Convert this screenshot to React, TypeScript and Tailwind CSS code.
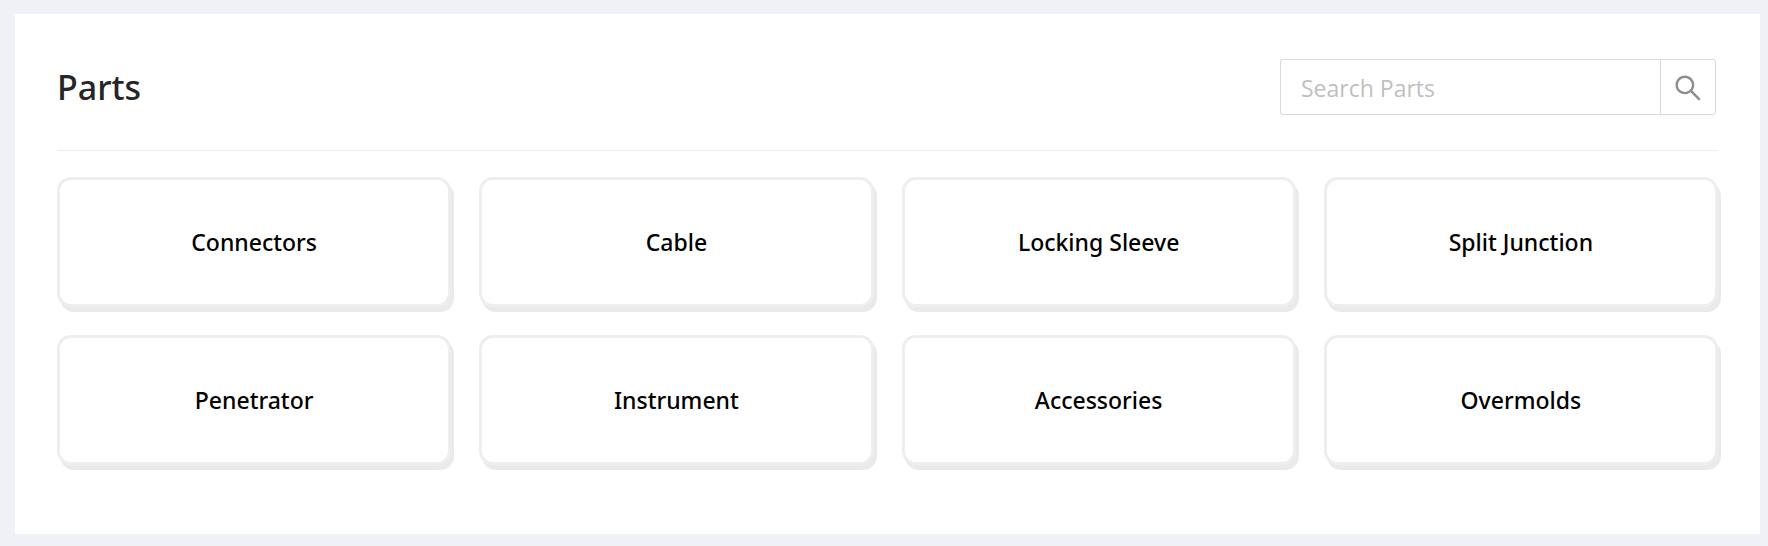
import { AiOutlineSearch } from "react-icons/ai";

const categories = [
  "Connectors",
  "Cable",
  "Locking Sleeve",
  "Split Junction",
  "Penetrator",
  "Instrument",
  "Accessories",
  "Overmolds",
];

function SearchBox() {
  return (
    <form
      role="search"
      className="flex h-14 w-full max-w-[436px]"
      onSubmit={(event) => event.preventDefault()}
    >
      <input
        type="text"
        aria-label="Search Parts"
        placeholder="Search Parts"
        className="min-w-0 flex-1 rounded-l-[3px] border border-r-0 border-[#d9d9d9] bg-white px-5 pt-0.5 font-['Open_Sans','Noto_Sans',sans-serif] text-[23px] text-black/85 outline-none placeholder:text-[#bfbfbf]"
      />
      <button
        type="submit"
        aria-label="Search"
        className="flex w-14 shrink-0 items-center justify-center rounded-r-[3px] border border-[#d9d9d9] bg-white pt-0.5 text-[#8c8c8c] shadow-[0_4px_0_rgba(0,0,0,0.016)]"
      >
        <AiOutlineSearch className="size-8" aria-hidden="true" />
      </button>
    </form>
  );
}

function CategoryCard({ name }: { name: string }) {
  return (
    <button
      type="button"
      className="flex h-[130px] items-center justify-center rounded-[14px] border-3 border-[#eeeeee] bg-white text-[23px] font-medium text-black shadow-[3px_5px_0_#eaeaea]"
    >
      {name}
    </button>
  );
}

export default function App() {
  return (
    <div className="min-h-screen bg-[#f0f1f6] pt-3.5 pr-2 pb-3 pl-[15px] font-['Noto_Sans','Open_Sans',sans-serif]">
      <main className="bg-white px-[42px] pt-[45px] pb-[69px]">
        <header className="flex items-center justify-between gap-6 border-b border-[#ededed] pr-0.5 pb-[35px]">
          <h1 className="text-[34px] font-medium text-[#262626]">Parts</h1>
          <SearchBox />
        </header>
        <section
          aria-label="Part categories"
          className="mt-[26px] grid grid-cols-2 gap-7 md:grid-cols-4"
        >
          {categories.map((name) => (
            <CategoryCard key={name} name={name} />
          ))}
        </section>
      </main>
    </div>
  );
}
